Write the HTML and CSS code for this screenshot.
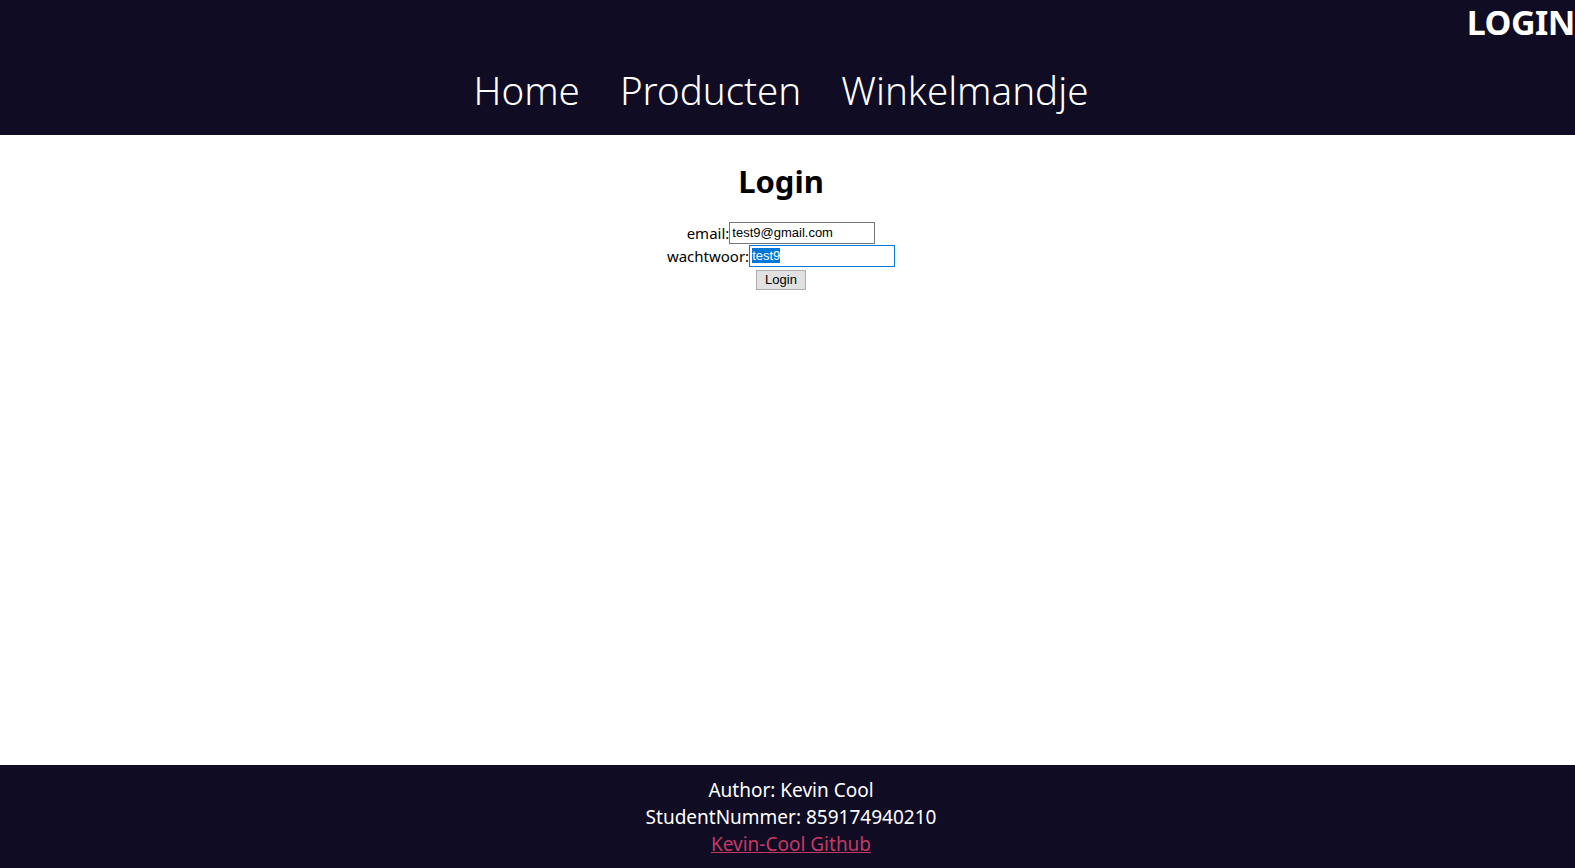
FILE: index.html
```html
<!DOCTYPE html>
<html lang="nl">
<head>
<meta charset="utf-8">
<title>Login</title>
<link rel="stylesheet" href="styles.css">
</head>
<body>
<div class="page">
  <header class="header">
    <div class="topbar"><a class="login-link" href="#">LOGIN</a></div>
    <nav class="nav">
      <a href="#">Home</a>
      <a href="#">Producten</a>
      <a href="#">Winkelmandje</a>
    </nav>
  </header>
  <main class="main">
    <h1 class="title">Login</h1>
    <form class="form">
      <div class="row"><label for="email">email:</label><input id="email" class="field" type="text" value="test9@gmail.com"></div>
      <div class="row"><label for="pw">wachtwoor:</label><input id="pw" class="field" type="text" value="test9"></div>
      <div class="row"><button class="btn" type="button">Login</button></div>
    </form>
  </main>
  <footer class="footer">
    <div>Author: Kevin Cool</div>
    <div>StudentNummer: 859174940210</div>
    <a class="gh" href="#">Kevin-Cool Github</a>
  </footer>
</div>
<script src="script.js"></script>
</body>
</html>
```
FILE: script.js
```js
var pw = document.getElementById('pw');
pw.focus();
pw.select();
```
FILE: styles.css
```css
html, body { margin: 0; padding: 0; }
body { font-family: "Segoe UI", "Noto Sans", sans-serif; color: #000; background: #fff; }
.page { min-height: 100vh; display: flex; flex-direction: column; }
.header { background: #0f0c24; height: 135px; box-sizing: border-box; }
.topbar { display: flex; justify-content: flex-end; height: 44px; }
.login-link { color: #fff; text-decoration: none; font-weight: 700; font-size: 34px; line-height: 44px; letter-spacing: -0.5px; }
.nav { display: flex; justify-content: center; gap: 40px; margin-top: 24px; padding-right: 13px; }
.nav a { color: #fff; text-decoration: none; font-size: 38.5px; line-height: 44px; font-weight: 300; }
.main { flex: 1; text-align: center; padding-right: 13px; }
.title { font-size: 31px; font-weight: 700; margin: 26px 0 20px; line-height: 40px; }
.form { display: flex; flex-direction: column; align-items: center; }
.row { display: flex; align-items: center; height: 23px; font-size: 15px; }
.field { width: 146px; height: 22px; box-sizing: border-box; border: 1px solid #767676; padding: 1px 2px; font-family: "Liberation Sans", Arial, sans-serif; font-size: 13px; margin: 0; outline: none; color: #000; }
.field:focus { border-color: #0078d7; }
.field::selection { background: #0078d7; color: #fff; }
.btn { margin-top: 2px; width: 50px; height: 20px; padding: 0; border: 1px solid #adadad; background: #e1e1e1; font-family: "Liberation Sans", Arial, sans-serif; font-size: 13px; color: #000; }
.footer { background: #0f0c24; color: #fff; text-align: center; height: 103px; box-sizing: border-box; padding: 12px 0 0 7px; font-size: 19px; line-height: 27px; }
.gh { color: #c43a65; }
```
